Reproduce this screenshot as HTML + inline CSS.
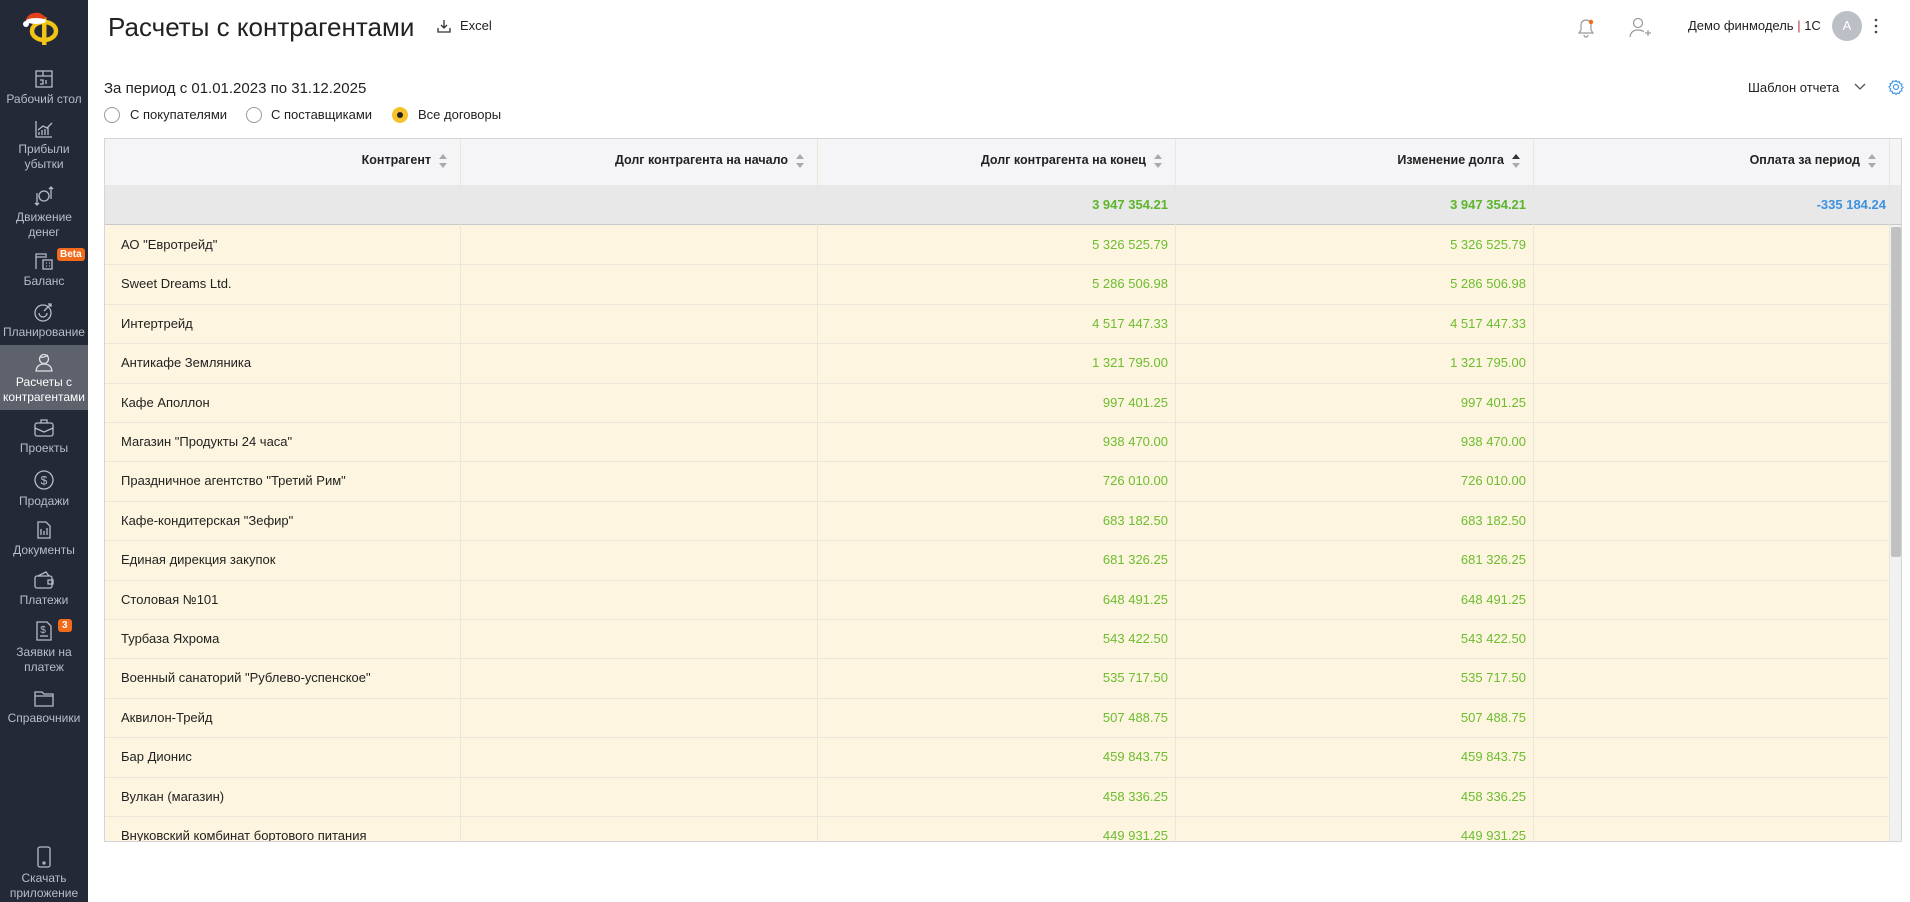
<!DOCTYPE html>
<html><head><meta charset="utf-8">
<style>
*{margin:0;padding:0;box-sizing:border-box}
body{width:1910px;height:902px;overflow:hidden;background:#fff;font-family:"Liberation Sans","DejaVu Sans",sans-serif;color:#222;position:relative}
.sb{position:absolute;left:0;top:0;width:88px;height:902px;background:#232937}
.it{position:absolute;left:0;width:88px;text-align:center;color:#b9bdc6;font-size:12px;line-height:15px}
.it svg{display:block;margin:0 auto 3px}
.act{background:#5e626d;color:#fff}
.badge{position:absolute;background:#f26a1b;color:#fff;font-size:10px;font-weight:bold;border-radius:3px;padding:0 3px;line-height:13px}
.t{position:absolute;white-space:nowrap}
.tbl{position:absolute;left:104px;top:138px;width:1798px;height:704px;border:1px solid #d5d5d9;overflow:hidden;background:#fdf5df}
.hd{position:absolute;left:0;top:0;width:100%;height:46px;background:#f5f5f7}
.tot{position:absolute;left:0;top:46px;width:100%;height:40px;background:#e8e8e8;border-bottom:1px solid #c9c9c9}
.col{position:absolute;top:0;bottom:0;width:1px;background:#ebe6dc}
.cell{position:absolute;font-size:13px;white-space:nowrap}
.h{font-weight:bold;font-size:12.5px;color:#222}
.g{color:#6cbd2f}
.gb{color:#5cb52a;font-weight:bold}
.row{position:absolute;left:0;width:1784px;height:1px;background:#ece6da}
.ar{display:inline-block;vertical-align:middle;margin-left:8px}
</style></head><body>
<div class="sb">
  <svg style="position:absolute;left:22px;top:8px" width="42" height="38" viewBox="0 0 42 38"><ellipse cx="22" cy="23" rx="12" ry="9" fill="none" stroke="#f2c416" stroke-width="4.5"/><rect x="20" y="9" width="4.5" height="28" fill="#f2c416"/><path d="M3 14 Q6 3 18 5 L25 10 L6 15Z" fill="#e2401b"/><ellipse cx="14" cy="13" rx="10" ry="3" fill="#fff"/><circle cx="4" cy="16" r="3" fill="#fff"/></svg>
  <div class="it" style="top:69px"><svg width="20" height="20" viewBox="0 0 20 20" fill="none" stroke="#b8bcc6" stroke-width="1.3"><rect x="2" y="2" width="16" height="16"/><path d="M2 7h16M9 2v5M6 11h3v4H6M12 11v4"/></svg>Рабочий стол</div>
  <div class="it" style="top:119px"><svg width="20" height="20" viewBox="0 0 20 20" fill="none" stroke="#b8bcc6" stroke-width="1.3"><path d="M2 2v16h16M5 16v-3M8 16v-5M11 16v-6M14 16v-8M4 11l5-4 4 2 5-5"/></svg>Прибыли<br>убытки</div>
  <div class="it" style="top:185px"><svg width="22" height="22" viewBox="0 0 22 22" fill="none" stroke="#b8bcc6" stroke-width="1.3"><circle cx="11" cy="11" r="5"/><path d="M4 8v12M2 18l2 2 2-2M18 14V2M16 4l2-2 2 2"/></svg>Движение<br>денег</div>
  <div class="it" style="top:251px"><svg width="22" height="20" viewBox="0 0 22 20" fill="none" stroke="#b8bcc6" stroke-width="1.3"><path d="M3 18V3h10v4M3 6h9"/><rect x="10" y="9" width="9" height="9"/><path d="M13 12h1M16 12h1M13 15h1M16 15h1"/></svg>Баланс</div>
  <div class="badge" style="left:57px;top:248px">Beta</div>
  <div class="it" style="top:302px"><svg width="22" height="20" viewBox="0 0 22 20" fill="none" stroke="#b8bcc6" stroke-width="1.3"><circle cx="10" cy="11" r="8"/><path d="M6 11a4 4 0 0 0 8 0M11 9l7-7M15 2h3v3"/></svg>Планирование</div>
  <div class="it act" style="top:345px;height:65px;padding-top:7px;color:#fff"><svg width="22" height="20" viewBox="0 0 22 20" fill="none" stroke="#e0e2e6" stroke-width="1.3"><circle cx="11" cy="7" r="4.5"/><path d="M3 19q1-7 8-7t8 7zM7 5q4 1 8-2"/></svg>Расчеты с<br>контрагентами</div>
  <div class="it" style="top:418px"><svg width="22" height="20" viewBox="0 0 22 20" fill="none" stroke="#b8bcc6" stroke-width="1.3"><rect x="2" y="5" width="18" height="13" rx="2"/><path d="M8 5V2h6v3M2 10l9 4 9-4"/></svg>Проекты</div>
  <div class="it" style="top:469px"><svg width="22" height="22" viewBox="0 0 22 22" fill="none" stroke="#b8bcc6" stroke-width="1.3"><circle cx="11" cy="11" r="9"/><text x="11" y="15.5" font-size="12" text-anchor="middle" fill="#b8bcc6" stroke="none">$</text></svg>Продажи</div>
  <div class="it" style="top:520px"><svg width="20" height="20" viewBox="0 0 20 20" fill="none" stroke="#b8bcc6" stroke-width="1.3"><path d="M4 2h8l4 4v12H4z"/><path d="M7 9v6M10 11v4M13 8v7"/></svg>Документы</div>
  <div class="it" style="top:570px"><svg width="22" height="20" viewBox="0 0 22 20" fill="none" stroke="#b8bcc6" stroke-width="1.3"><rect x="2" y="6" width="17" height="12" rx="2"/><path d="M5 6l8-4 3 4M15 10h5v4h-5z"/></svg>Платежи</div>
  <div class="it" style="top:620px"><svg width="20" height="22" viewBox="0 0 20 22" fill="none" stroke="#b8bcc6" stroke-width="1.3"><path d="M3 2h10l4 4v14H3z"/><text x="9" y="13" font-size="10" text-anchor="middle" fill="#b8bcc6" stroke="none">$</text><path d="M6 16h8"/></svg>Заявки на<br>платеж</div>
  <div class="badge" style="left:58px;top:619px;padding:0 4px">3</div>
  <div class="it" style="top:688px"><svg width="22" height="20" viewBox="0 0 22 20" fill="none" stroke="#b8bcc6" stroke-width="1.3"><path d="M2 4h7l2 2h9v12H2z"/><path d="M2 8h18"/></svg>Справочники</div>
  <div class="it" style="top:846px"><svg width="14" height="22" viewBox="0 0 14 22" fill="none" stroke="#b8bcc6" stroke-width="1.3"><rect x="1" y="1" width="12" height="20" rx="2"/><circle cx="7" cy="17" r="1"/></svg>Скачать<br>приложение</div>
</div>

<div class="t" style="left:108px;top:12px;font-size:26px;color:#222">Расчеты с контрагентами</div>
<svg style="position:absolute;left:437px;top:19px" width="14" height="14" viewBox="0 0 14 14" fill="none" stroke="#333" stroke-width="1.3"><path d="M7 1v8M4 6l3 3 3-3M1 9v4h12V9"/></svg>
<div class="t" style="left:460px;top:18px;font-size:13px">Excel</div>

<svg style="position:absolute;left:1575px;top:16px" width="22" height="22" viewBox="0 0 22 22" fill="none" stroke="#999" stroke-width="1.2"><path d="M4 17h14l-2-3V9a5 5 0 0 0-10 0v5zM9 19a2 2 0 0 0 4 0"/><circle cx="16" cy="6" r="2.2" fill="#f26a1b" stroke="none"/></svg>
<svg style="position:absolute;left:1628px;top:16px" width="24" height="24" viewBox="0 0 24 24" fill="none" stroke="#999" stroke-width="1.2"><circle cx="10" cy="7" r="4.5"/><path d="M2 21q1-7 8-7 4 0 6 2M17 17h6M20 14v6"/></svg>
<div class="t" style="left:1688px;top:18px;font-size:13px">Демо финмодель <span style="color:#b33">|</span> 1С</div>
<div style="position:absolute;left:1832px;top:11px;width:30px;height:30px;border-radius:50%;background:#bcbfc6;color:#fff;font-size:13px;text-align:center;line-height:30px">A</div>
<svg style="position:absolute;left:1874px;top:18px" width="4" height="16" viewBox="0 0 4 16" fill="#444"><circle cx="2" cy="2" r="1.3"/><circle cx="2" cy="8" r="1.3"/><circle cx="2" cy="14" r="1.3"/></svg>

<div class="t" style="left:104px;top:80px;font-size:15px">За период с 01.01.2023 по 31.12.2025</div>
<div style="position:absolute;left:104px;top:107px;width:16px;height:16px;border:1px solid #999;border-radius:50%"></div>
<div class="t" style="left:130px;top:107px;font-size:13px">С покупателями</div>
<div style="position:absolute;left:246px;top:107px;width:16px;height:16px;border:1px solid #999;border-radius:50%"></div>
<div class="t" style="left:271px;top:107px;font-size:13px">С поставщиками</div>
<div style="position:absolute;left:392px;top:107px;width:16px;height:16px;background:#f6c12b;border-radius:50%"><div style="position:absolute;left:5px;top:5px;width:6px;height:6px;border-radius:50%;background:#222"></div></div>
<div class="t" style="left:418px;top:107px;font-size:13px">Все договоры</div>

<div class="t" style="left:1748px;top:80px;font-size:13px">Шаблон отчета</div>
<svg style="position:absolute;left:1854px;top:83px" width="12" height="8" viewBox="0 0 12 8" fill="none" stroke="#555" stroke-width="1.3"><path d="M1 1l5 5 5-5"/></svg>
<svg style="position:absolute;left:1888px;top:79px" width="16" height="16" viewBox="0 0 16 16" fill="none" stroke="#4a9be8" stroke-width="1.2"><circle cx="8" cy="8" r="2.5"/><path d="M8 1.5l1.3 1.6 2-.5.6 2 2 .6-.5 2L15 8.5l-1.6 1.3.5 2-2 .6-.6 2-2-.5L8 15.5l-1.3-1.6-2 .5-.6-2-2-.6.5-2L1 8l1.6-1.3-.5-2 2-.6.6-2 2 .5z"/></svg>

<div class="tbl">
  <div class="hd"></div>
  <div class="tot"></div>
  <div class="col" style="left:355px"></div>
  <div class="col" style="left:712px"></div>
  <div class="col" style="left:1070px"></div>
  <div class="col" style="left:1428px"></div>
  <div class="col" style="left:1784px"></div>
  <div style="position:absolute;left:1785px;top:86px;width:12px;height:618px;background:#f1f1f1"></div>
  <div style="position:absolute;left:1786px;top:88px;width:10px;height:330px;background:#c1c1c1;border-radius:2px"></div>
  <div id="hdr"></div>
</div>
<script>
var T=document.querySelector('.tbl');
function ar(c){return '<svg class="ar" width="8" height="14" viewBox="0 0 8 14"><path d="M0 5l4-5 4 5z" fill="'+(c?'#333':'#aaa')+'"/><path d="M0 9l4 5 4-5z" fill="#aaa"/></svg>';}
var ends=[355,712,1070,1428,1784];
var hs=['Контрагент','Долг контрагента на начало','Долг контрагента на конец','Изменение долга','Оплата за период'];
var h='';
hs.forEach(function(s,i){h+='<div class="cell h" style="right:'+(1797-ends[i]+12)+'px;top:14px">'+s+ar(i==3)+'</div>';});
h+='<div class="cell gb" style="right:'+(1797-1070+6)+'px;top:58px">3 947 354.21</div>';
h+='<div class="cell gb" style="right:'+(1797-1428+6)+'px;top:58px">3 947 354.21</div>';
h+='<div class="cell" style="right:'+(1797-1784+2)+'px;top:58px;color:#3d92e0;font-weight:bold">-335 184.24</div>';
var d=[['АО "Евротрейд"','5 326 525.79'],['Sweet Dreams Ltd.','5 286 506.98'],['Интертрейд','4 517 447.33'],['Антикафе Земляника','1 321 795.00'],['Кафе Аполлон','997 401.25'],['Магазин "Продукты 24 часа"','938 470.00'],['Праздничное агентство "Третий Рим"','726 010.00'],['Кафе-кондитерская "Зефир"','683 182.50'],['Единая дирекция закупок','681 326.25'],['Столовая №101','648 491.25'],['Турбаза Яхрома','543 422.50'],['Военный санаторий "Рублево-успенское"','535 717.50'],['Аквилон-Трейд','507 488.75'],['Бар Дионис','459 843.75'],['Вулкан (магазин)','458 336.25'],['Внуковский комбинат бортового питания','449 931.25']];
d.forEach(function(r,i){var y=86+i*39.4;
 if(i>0)h+='<div class="row" style="top:'+y+'px"></div>';
 h+='<div class="cell" style="left:16px;top:'+(y+12)+'px">'+r[0]+'</div>';
 h+='<div class="cell g" style="right:'+(1797-1070+6)+'px;top:'+(y+12)+'px">'+r[1]+'</div>';
 h+='<div class="cell g" style="right:'+(1797-1428+6)+'px;top:'+(y+12)+'px">'+r[1]+'</div>';});
document.getElementById('hdr').innerHTML=h;
</script>
</body></html>
